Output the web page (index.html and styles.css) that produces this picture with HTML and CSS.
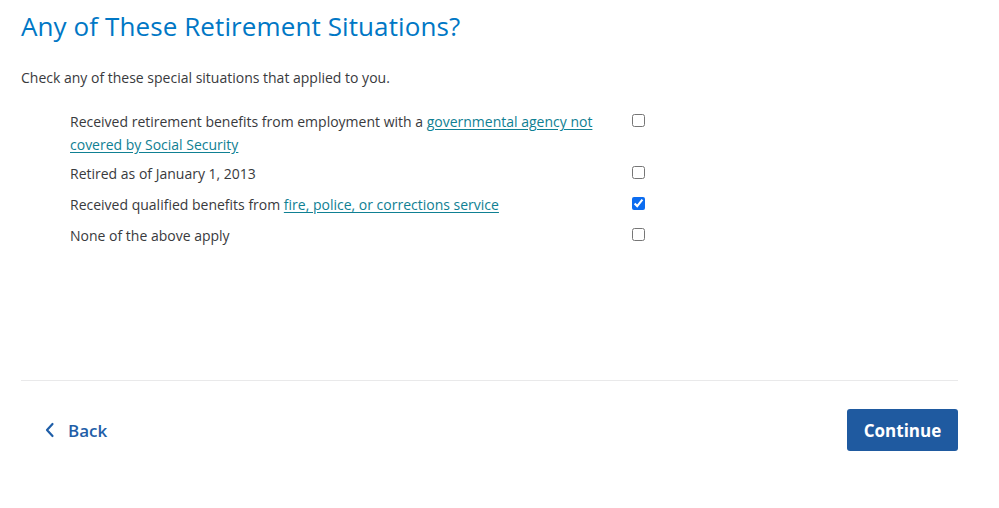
FILE: index.html
```html
<!DOCTYPE html>
<html lang="en">
<head>
<meta charset="utf-8">
<title>Any of These Retirement Situations?</title>
<link rel="stylesheet" href="styles.css">
</head>
<body>
<main class="page">
  <h1 class="title">Any of These Retirement Situations?</h1>
  <p class="intro">Check any of these special situations that applied to you.</p>
  <ul class="options">
    <li class="option">
      <label class="option-text" for="c1">Received retirement benefits from employment with a <a href="#" class="link">governmental agency not covered by Social Security</a></label>
      <input type="checkbox" id="c1" class="check">
    </li>
    <li class="option">
      <label class="option-text" for="c2">Retired as of January 1, 2013</label>
      <input type="checkbox" id="c2" class="check">
    </li>
    <li class="option">
      <label class="option-text" for="c3">Received qualified benefits from <a href="#" class="link">fire, police, or corrections service</a></label>
      <input type="checkbox" id="c3" class="check" checked>
    </li>
    <li class="option">
      <label class="option-text" for="c4">None of the above apply</label>
      <input type="checkbox" id="c4" class="check">
    </li>
  </ul>
  <footer class="footer">
    <button class="back" type="button">
      <svg class="chevron" width="10" height="16" viewBox="0 0 10 16" aria-hidden="true"><path d="M7.5 2 L2 8 L7.5 14" fill="none" stroke="currentColor" stroke-width="2.2" stroke-linecap="round" stroke-linejoin="round"/></svg>
      <span>Back</span>
    </button>
    <button class="continue" type="button">Continue</button>
  </footer>
</main>
</body>
</html>
```
FILE: styles.css
```css
* { box-sizing: border-box; }
html, body { margin: 0; padding: 0; background: #fff; }
body {
  font-family: "Open Sans", "Noto Sans", sans-serif;
  color: #393a3d;
}
.page {
  width: 958px;
  padding: 6px 0 0 21px;
}
.title {
  margin: 0;
  font-size: 26px;
  font-weight: 400;
  line-height: 40px;
  color: #0077c5;
  letter-spacing: 0.1px;
}
.intro {
  margin: 22px 0 0;
  font-size: 14px;
  line-height: 20px;
}
.options {
  list-style: none;
  margin: 22px 0 0 49px;
  padding: 0;
}
.option {
  display: flex;
  align-items: flex-start;
  gap: 28px;
  margin-bottom: 8px;
}
.option:first-child { margin-bottom: 6px; }
.option-text {
  width: 534px;
  font-size: 14px;
  line-height: 23px;
}
.link {
  color: #0f8093;
  text-decoration: underline;
  text-underline-offset: 2px;
}
.check {
  width: 13px;
  height: 13px;
  margin: 4px 0 0;
  accent-color: #0b6cf0;
}
.footer {
  margin-top: 133px;
  border-top: 1px solid #e9e9ea;
  display: flex;
  justify-content: space-between;
  align-items: center;
  padding-top: 28px;
}
.back {
  display: flex;
  align-items: center;
  gap: 13px;
  background: none;
  border: 0;
  padding: 0 0 0 24px;
  font-family: inherit;
  font-size: 17px;
  font-weight: 600;
  color: #1f5ea8;
  cursor: pointer;
}
.chevron { display: block; }
.continue {
  width: 111px;
  height: 42px;
  border: 0;
  border-radius: 3px;
  background: #1f5aa0;
  color: #fff;
  font-family: inherit;
  font-size: 17px;
  font-weight: 700;
  cursor: pointer;
}
```
